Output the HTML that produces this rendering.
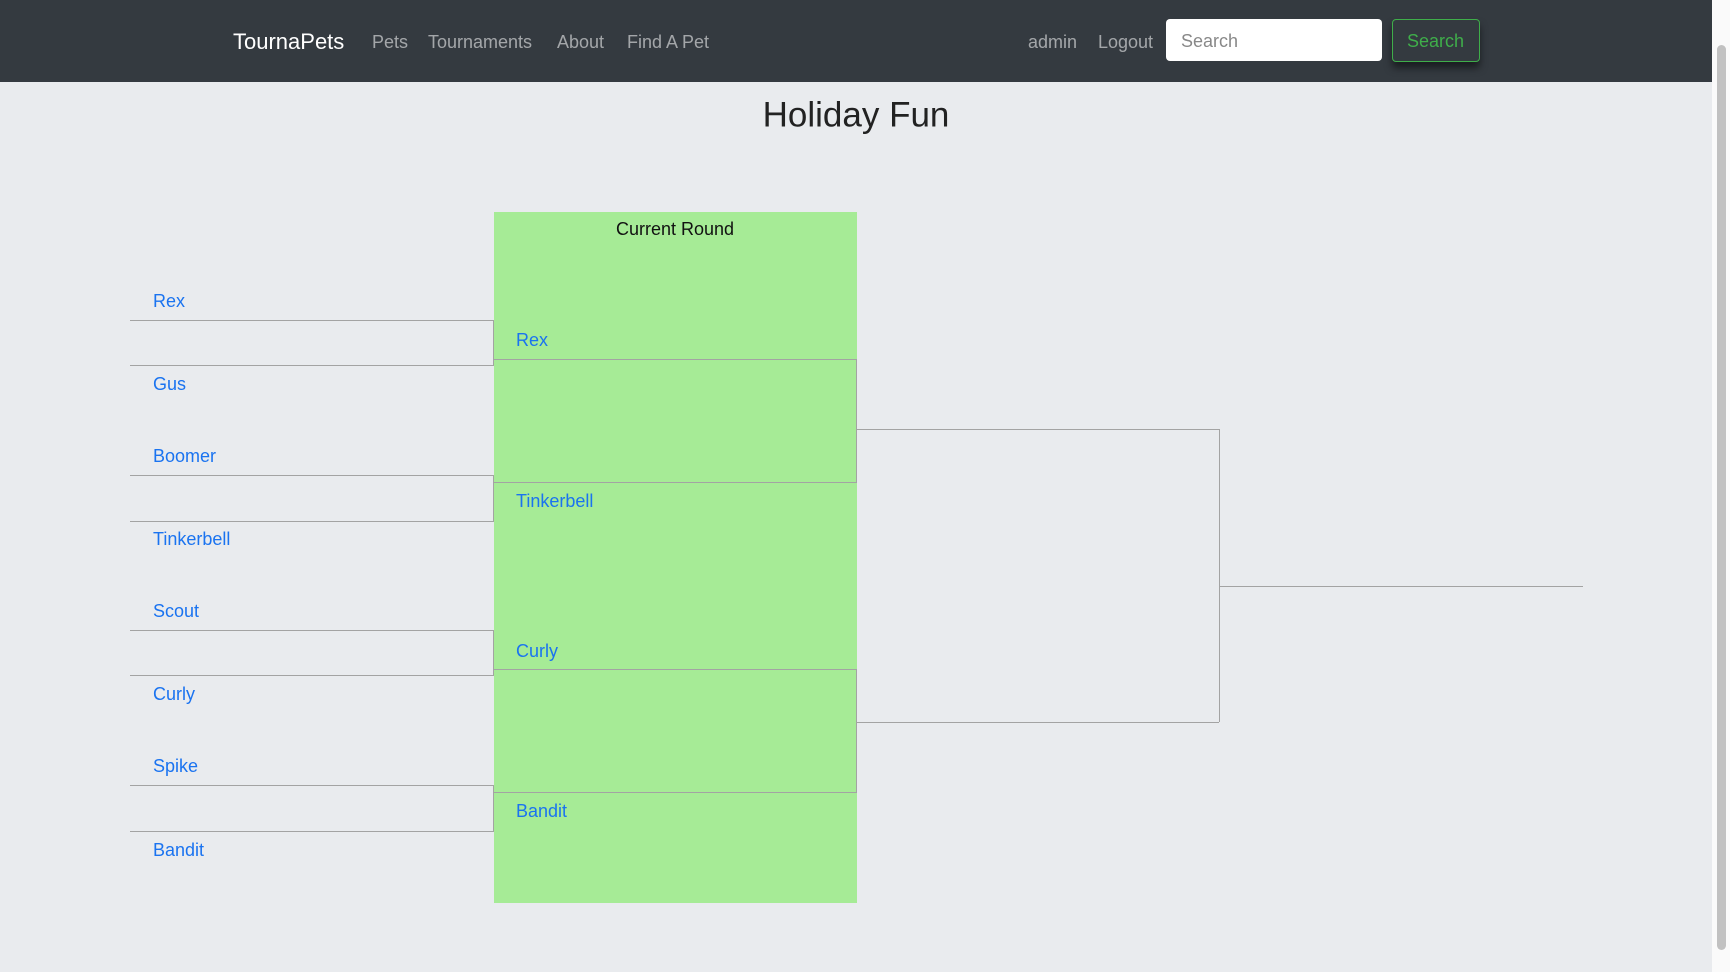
<!DOCTYPE html>
<html><head><style>
body{margin:0;width:1730px;height:972px;background:#e9ebee;font-family:"Liberation Sans",sans-serif;position:relative;overflow:hidden}
.nav{position:absolute;left:0;top:0;width:1712px;height:82px;background:#343a40}
.t{position:absolute;white-space:nowrap;line-height:1;transform:translateY(-50%)}
.nl{color:rgba(255,255,255,.55);font-size:18px}
.a{color:#1a73f0;font-size:18px}
.h{position:absolute;background:#a3a3a3;height:1px}
.v{position:absolute;background:#a3a3a3;width:1px}
</style></head><body>
<div class="nav"></div>
<div class="t" style="left:233px;top:42px;color:#fff;font-size:22px">TournaPets</div>
<div class="t nl" style="left:372px;top:42px">Pets</div>
<div class="t nl" style="left:428px;top:42px">Tournaments</div>
<div class="t nl" style="left:557px;top:42px">About</div>
<div class="t nl" style="left:627px;top:42px">Find A Pet</div>
<div class="t nl" style="left:1028px;top:42px">admin</div>
<div class="t nl" style="left:1098px;top:42px">Logout</div>
<div style="position:absolute;left:1166px;top:19px;width:216px;height:42px;background:#fff;border-radius:4px"></div>
<div class="t" style="left:1181px;top:41px;color:#888;font-size:18px">Search</div>
<div style="position:absolute;left:1392px;top:19px;width:86px;height:41px;border:1px solid #3fae4a;border-radius:4px;box-shadow:0 6px 8px rgba(0,0,0,.5)"></div>
<div class="t" style="left:1407px;top:41px;color:#3fae4a;font-size:18px">Search</div>
<div style="position:absolute;left:1712px;top:0;width:18px;height:972px;background:#fafafa"></div>
<div style="position:absolute;left:1717px;top:45px;width:9px;height:905px;background:#c1c1c1;border-radius:5px"></div>
<div class="t" style="left:856px;top:115px;transform:translate(-50%,-50%);font-size:35px;color:#222">Holiday Fun</div>
<div style="position:absolute;left:494px;top:212px;width:363px;height:691px;background:#a6eb96"></div>
<div class="t" style="left:675px;top:229px;transform:translate(-50%,-50%);font-size:18px;color:#111">Current Round</div>
<!-- left pairs -->
<div class="h" style="left:130px;top:320px;width:364px"></div><div class="h" style="left:130px;top:365px;width:364px"></div><div class="v" style="left:493px;top:320px;height:45px"></div>
<div class="h" style="left:130px;top:475px;width:364px"></div><div class="h" style="left:130px;top:521px;width:364px"></div><div class="v" style="left:493px;top:475px;height:46px"></div>
<div class="h" style="left:130px;top:630px;width:364px"></div><div class="h" style="left:130px;top:675px;width:364px"></div><div class="v" style="left:493px;top:630px;height:45px"></div>
<div class="h" style="left:130px;top:785px;width:364px"></div><div class="h" style="left:130px;top:831px;width:364px"></div><div class="v" style="left:493px;top:785px;height:46px"></div>
<!-- round 2 -->
<div class="h" style="left:494px;top:359px;width:363px"></div><div class="h" style="left:494px;top:482px;width:363px"></div><div class="v" style="left:856px;top:359px;height:123px"></div>
<div class="h" style="left:494px;top:669px;width:363px"></div><div class="h" style="left:494px;top:792px;width:363px"></div><div class="v" style="left:856px;top:669px;height:123px"></div>
<div class="h" style="left:857px;top:429px;width:362px"></div><div class="h" style="left:857px;top:722px;width:362px"></div><div class="v" style="left:1219px;top:429px;height:293px"></div>
<div class="h" style="left:1219px;top:586px;width:364px"></div>
<div class="t a" style="left:153px;top:301px">Rex</div>
<div class="t a" style="left:153px;top:384px">Gus</div>
<div class="t a" style="left:153px;top:456px">Boomer</div>
<div class="t a" style="left:153px;top:539px">Tinkerbell</div>
<div class="t a" style="left:153px;top:611px">Scout</div>
<div class="t a" style="left:153px;top:694px">Curly</div>
<div class="t a" style="left:153px;top:766px">Spike</div>
<div class="t a" style="left:153px;top:850px">Bandit</div>
<div class="t a" style="left:516px;top:340px">Rex</div>
<div class="t a" style="left:516px;top:501px">Tinkerbell</div>
<div class="t a" style="left:516px;top:651px">Curly</div>
<div class="t a" style="left:516px;top:811px">Bandit</div>
</body></html>
